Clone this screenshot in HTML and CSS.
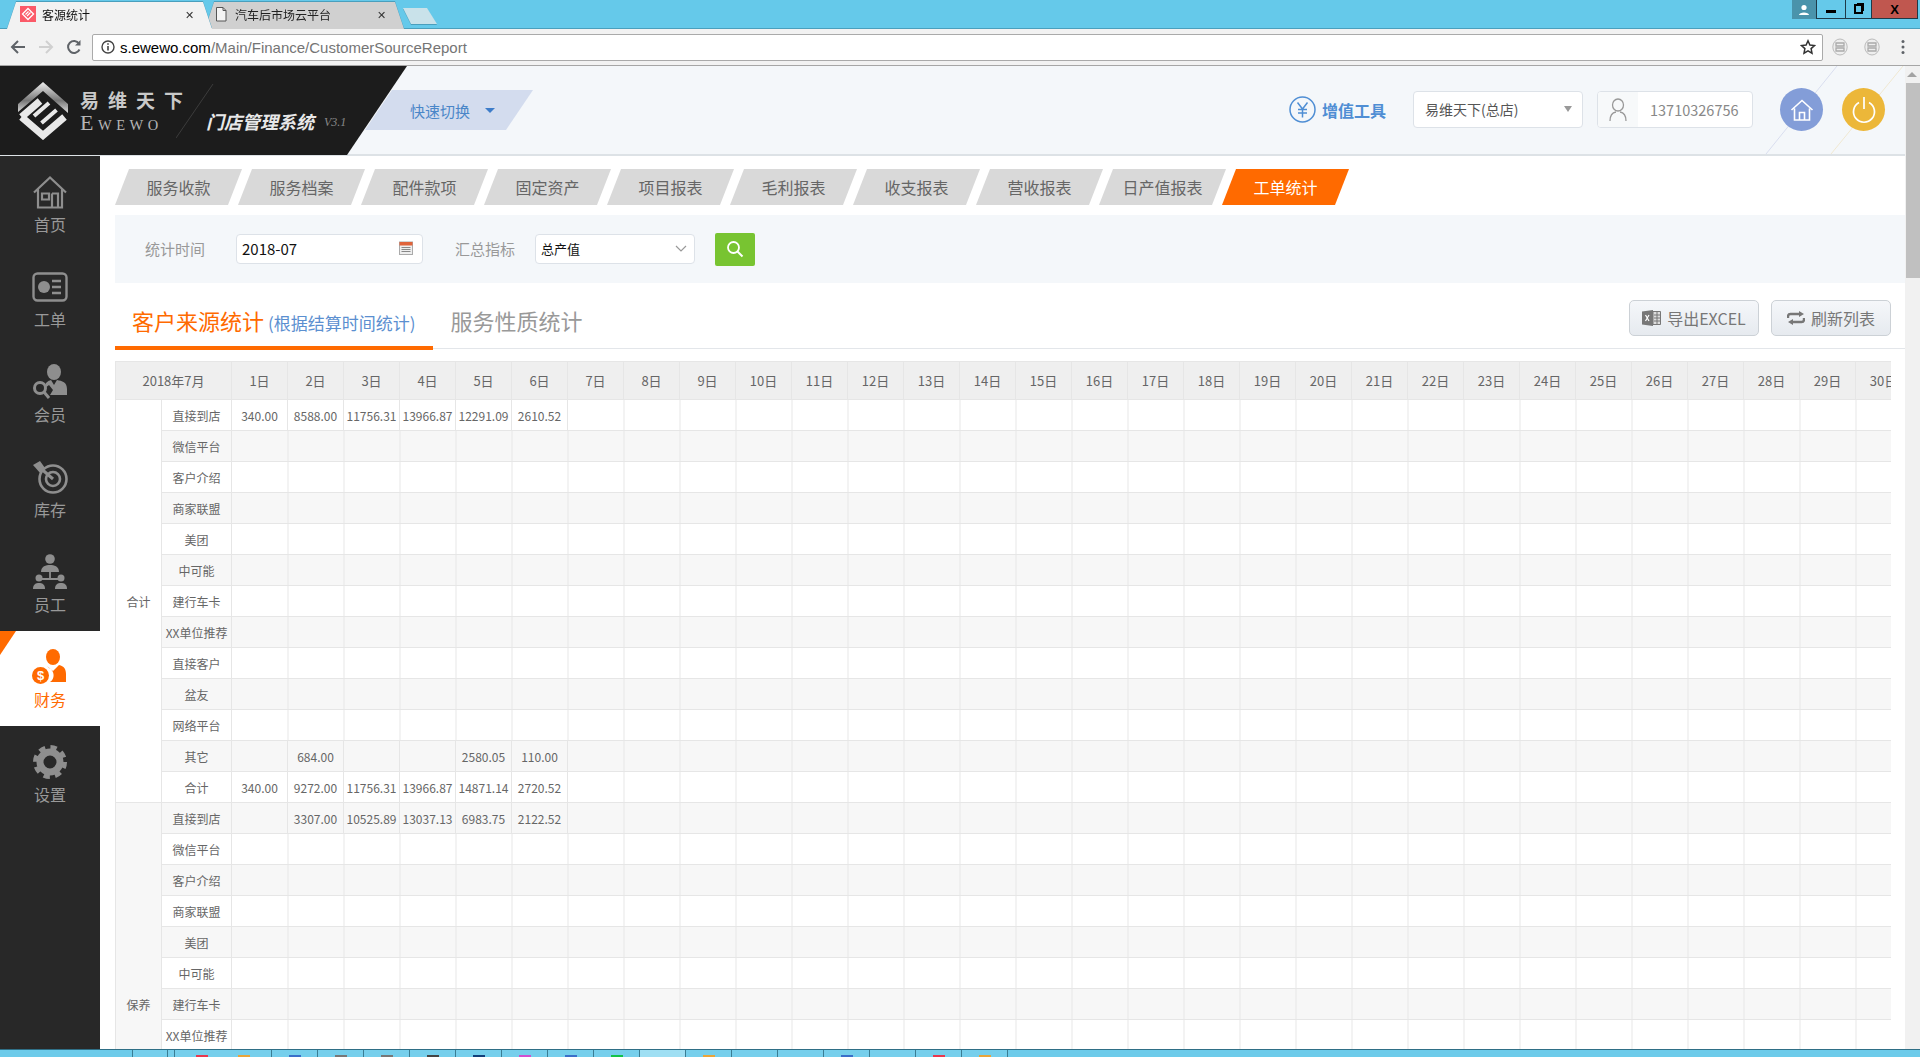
FILE: index.html
```html
<!DOCTYPE html>
<html>
<head>
    <meta charset="utf-8">
    <title>客源统计</title>
    <link rel="stylesheet" href="styles.css">
</head>
<body>
    <div class="tabstrip">
        <div class="tab-wrap on">
            <div class="tab">
                <svg class="favicon" width="16" height="16" viewBox="0 0 16 16"><rect width="16" height="16" fill="#fb5a68"/><path d="M8 2.5 13.5 8 8 13.5 2.5 8Z" fill="none" stroke="#fff" stroke-width="1.3"/><path d="M5.5 8.5 8.5 5.5M7 10 10.500 6.500" stroke="#fff" stroke-width="1.2"/></svg>
                <span class="tab-name">客源统计</span>
                <span class="tab-close">✕</span>
            </div>
        </div>
        <div class="tab-wrap off">
            <div class="tab">
                <svg class="favicon" width="16" height="16" viewBox="0 0 16 16"><path d="M3.500 1.500H10L13 4.500V15H3.500Z" fill="#f4f4f4" stroke="#555"/><path d="M10 1.500V4.500H13" fill="none" stroke="#555"/></svg>
                <span class="tab-name">汽车后市场云平台</span>
                <span class="tab-close">✕</span>
            </div>
        </div>
        <div class="newtab-wrap"><div class="newtab"></div></div>
        <div class="winctl">
            <span class="win-user"><svg width="12" height="12" viewBox="0 0 12 12"><circle cx="6" cy="3.500" r="2.600" fill="#fff"/><path d="M1 11C1 7.500 11 7.500 11 11Z" fill="#fff"/></svg></span>
            <span class="win-btn win-min"><i></i></span>
            <span class="win-btn win-max"><i></i></span>
            <span class="win-btn win-close">X</span>
        </div>
    </div>

    <div class="toolbar">
        <svg class="nav-ico" width="16" height="16" viewBox="0 0 16 16"><path d="M15 8H2M8 2 2 8l6 6" fill="none" stroke="#5f6368" stroke-width="2"/></svg>
        <svg class="nav-ico" width="16" height="16" viewBox="0 0 16 16"><path d="M1 8H14M8 2l6 6-6 6" fill="none" stroke="#d0d0d0" stroke-width="2"/></svg>
        <svg class="nav-ico" width="16" height="16" viewBox="0 0 16 16"><path d="M13.500 10.500A6 6 0 1 1 13 4.500" fill="none" stroke="#5f6368" stroke-width="2"/><path d="M14.500 1v5.500H9Z" fill="#5f6368"/></svg>
        <div class="addr">
            <svg width="14" height="14" viewBox="0 0 14 14"><circle cx="7" cy="7" r="6" fill="none" stroke="#444" stroke-width="1.400"/><path d="M7 6v4.500M7 3.200v1.600" stroke="#444" stroke-width="1.600"/></svg>
            <span class="addr-url"><b>s.ewewo.com</b>/Main/Finance/CustomerSourceReport</span>
            <svg class="addr-star" width="16" height="16" viewBox="0 0 16 16"><path d="M8 1.800 9.900 6 14.500 6.500 11.100 9.600 12 14.200 8 11.900 4 14.200 4.900 9.600 1.500 6.500 6.100 6Z" fill="none" stroke="#333" stroke-width="1.500"/></svg>
        </div>
        <svg class="ext-ico" width="16" height="18" viewBox="0 0 16 18"><ellipse cx="8" cy="9" rx="7.200" ry="8" fill="#eee" stroke="#bbb"/><path d="M4 5h8v3H4zM4 10h8v3H4z" fill="none" stroke="#aaa" stroke-width="1.300"/></svg>
        <svg class="ext-ico" width="16" height="18" viewBox="0 0 16 18"><ellipse cx="8" cy="9" rx="7.200" ry="8" fill="#eee" stroke="#bbb"/><path d="M4 5h8v3H4zM4 10h8v3H4z" fill="none" stroke="#aaa" stroke-width="1.300"/></svg>
        <svg class="menu-ico" width="4" height="16" viewBox="0 0 4 16"><circle cx="2" cy="2.500" r="1.500" fill="#5f6368"/><circle cx="2" cy="8" r="1.500" fill="#5f6368"/><circle cx="2" cy="13.500" r="1.500" fill="#5f6368"/></svg>
    </div>

    <div class="app">
        <div class="page">
            <div class="head">
                <div class="logo">
                    <svg class="logo-mark" width="50" height="58" viewBox="0 0 50 58">
                        <defs><linearGradient id="roof" x1="0" y1="0" x2="0" y2="1"><stop offset="0" stop-color="#eee"/><stop offset=".6" stop-color="#777"/><stop offset="1" stop-color="#ddd"/></linearGradient></defs>
                        <path d="M25 0 50 22V31L25 9 0 30V22Z" fill="url(#roof)"/>
                        <path d="M3.500 35 22 19M3.500 35 25 53.500 46.500 35" fill="none" stroke="#e8e8e8" stroke-width="7"/>
                        <path d="M16 34 31 21M23.500 41 38.500 28" stroke="#e8e8e8" stroke-width="4"/>
                    </svg>
                    <div class="brand">
                        <div class="brand-cn">易维天下</div>
                        <div class="brand-en"><span>E</span>WEWO</div>
                    </div>
                    <svg class="logo-slash" width="38" height="54" viewBox="0 0 38 54"><path d="M37 0 0 54" stroke="#3c3c3c"/></svg>
                    <div class="sysname">门店管理系统</div>
                    <div class="sysver">V3.1</div>
                </div>
                <div class="quick"><span>快速切换</span><i></i></div>
                <svg class="head-deco" width="180" height="88" viewBox="0 0 180 88"><path d="M112 0 41 88" stroke="#d9deef"/><path d="M178 0 106 88" stroke="#f0e8d2"/></svg>
                <div class="head-right">
                    <div class="vas">
                        <svg width="27" height="27" viewBox="0 0 27 27"><circle cx="13.500" cy="13.500" r="12.500" fill="none" stroke="#4f8ed4" stroke-width="1.500"/><path d="M8.500 6.500 13.500 13l5-6.500M13.500 13v8.500M9 13.500h9M9 17h9" fill="none" stroke="#4f8ed4" stroke-width="1.500"/></svg>
                        <span>增值工具</span>
                    </div>
                    <div class="shop"><span>易维天下(总店)</span><i></i></div>
                    <div class="user">
                        <span class="user-ico"><svg width="18" height="24" viewBox="0 0 18 24"><ellipse cx="9" cy="7" rx="5.500" ry="6" fill="none" stroke="#999" stroke-width="1.300"/><path d="M1 23C1 17 4 14.500 7 14M17 23C17 17 14 14.500 11 14" fill="none" stroke="#999" stroke-width="1.300"/></svg></span>
                        <span class="user-no">13710326756</span>
                    </div>
                    <span class="round round-home"><svg width="24" height="24" viewBox="0 0 24 24"><path d="M1.500 12 12 2.500 22.500 12M4.500 10.500V22H19.500V10.500M9.500 22V14.500H14.500V22" fill="none" stroke="#fff" stroke-width="1.600"/></svg></span>
                    <span class="round round-power"><svg width="26" height="28" viewBox="0 0 26 28"><path d="M8 6.500A10.500 10.500 0 1 0 18 6.500M13 1V13" fill="none" stroke="#fff" stroke-width="1.700"/></svg></span>
                </div>
            </div>

            <div class="layout">
                <div class="side">
                    <div class="side-item">
                        <svg width="34" height="33" viewBox="0 0 34 33"><path d="M1 17 17 2 33 17M5 14V32H29V14M9 18H16V24H9ZM19 18H25V32M19 18V32" fill="none" stroke="#8e8e8e" stroke-width="2.200"/></svg>
                        <span>首页</span>
                    </div>
                    <div class="side-item">
                        <svg width="36" height="30" viewBox="0 0 36 30"><rect x="1.500" y="1.500" width="33" height="27" rx="4" fill="none" stroke="#8e8e8e" stroke-width="2.400"/><circle cx="12" cy="15" r="6" fill="#8e8e8e"/><path d="M20 9H29M20 15H29M20 21H29" stroke="#8e8e8e" stroke-width="2.600"/></svg>
                        <span>工单</span>
                    </div>
                    <div class="side-item">
                        <svg width="36" height="36" viewBox="0 0 36 36"><ellipse cx="22" cy="8" rx="7" ry="8" fill="#8e8e8e"/><path d="M13 24C13 18 16 17 19 16L22 21 25 16C30 17 35 18 35 25V31H18L21 26 17 21Z" fill="#8e8e8e"/><circle cx="8" cy="24" r="5.500" fill="none" stroke="#8e8e8e" stroke-width="3"/><path d="M12 28 17 34" stroke="#8e8e8e" stroke-width="3"/></svg>
                        <span>会员</span>
                    </div>
                    <div class="side-item">
                        <svg width="36" height="34" viewBox="0 0 36 34"><circle cx="21" cy="19" r="13.500" fill="none" stroke="#8e8e8e" stroke-width="2.600"/><circle cx="21" cy="19" r="7" fill="none" stroke="#8e8e8e" stroke-width="2.600"/><path d="M21 19 6 6" stroke="#8e8e8e" stroke-width="3"/><path d="M1 5 8 1 13 8 9 14Z" fill="#8e8e8e"/></svg>
                        <span>库存</span>
                    </div>
                    <div class="side-item">
                        <svg width="34" height="36" viewBox="0 0 34 36"><circle cx="17" cy="5" r="4.800" fill="#8e8e8e"/><path d="M8 18C8 12 13 11 17 11S26 12 26 18Z" fill="#8e8e8e"/><path d="M17 18V25M7 25H27" stroke="#8e8e8e" stroke-width="1.800"/><circle cx="6" cy="24" r="3.500" fill="#8e8e8e"/><path d="M0 35C0 30 3 29 6 29S12 30 12 35Z" fill="#8e8e8e"/><circle cx="28" cy="24" r="3.500" fill="#8e8e8e"/><path d="M22 35C22 30 25 29 28 29S34 30 34 35Z" fill="#8e8e8e"/></svg>
                        <span>员工</span>
                    </div>
                    <div class="side-item on">
                        <svg width="36" height="36" viewBox="0 0 36 36"><ellipse cx="21" cy="8" rx="7" ry="8" fill="#ff6a00"/><path d="M15 17 21 22 27 16C32 17 34 20 34 25V33H18C23 30 23 22 17 19Z" fill="#ff6a00"/><circle cx="8.500" cy="26.500" r="8.500" fill="#ff6a00"/><text x="8.500" y="31" class="coin">$</text></svg>
                        <span>财务</span>
                    </div>
                    <div class="side-item">
                        <svg width="34" height="34" viewBox="0 0 34 34"><circle cx="17" cy="17" r="10" fill="none" stroke="#8e8e8e" stroke-width="7"/><circle cx="17" cy="17" r="14" fill="none" stroke="#8e8e8e" stroke-width="6" stroke-dasharray="6 4.996"/></svg>
                        <span>设置</span>
                    </div>
                </div>

                <div class="content">
                    <div class="subtabs">
                        <span>服务收款</span><span>服务档案</span><span>配件款项</span><span>固定资产</span><span>项目报表</span><span>毛利报表</span><span>收支报表</span><span>营收报表</span><span>日产值报表</span><span class="on">工单统计</span>
                    </div>
                    <div class="filter">
                        <label>统计时间</label>
                        <div class="date-box"><span>2018-07</span>
                            <svg width="14" height="14" viewBox="0 0 14 14"><rect x=".5" y="1" width="13" height="12.500" fill="#eee" stroke="#aaa"/><rect x=".5" y="1" width="13" height="3.500" fill="#e0633a"/><path d="M2.500 6.500h9M2.500 8.500h9M2.500 10.500h9" stroke="#888"/></svg>
                        </div>
                        <label class="lb2">汇总指标</label>
                        <div class="sel-box"><span>总产值</span>
                            <svg width="12" height="7" viewBox="0 0 12 7"><path d="M1 1 6 6 11 1" fill="none" stroke="#999" stroke-width="1.200"/></svg>
                        </div>
                        <span class="btn-search"><svg width="18" height="18" viewBox="0 0 18 18"><circle cx="7.500" cy="7.500" r="5.500" fill="none" stroke="#fff" stroke-width="1.800"/><path d="M11.500 11.500 16.500 16.500" stroke="#fff" stroke-width="2"/></svg></span>
                    </div>
                    <div class="stat-bar">
                        <div class="stat-tab on">客户来源统计<small>(根据结算时间统计)</small></div>
                        <div class="stat-tab">服务性质统计</div>
                        <div class="btns">
                            <span class="btn"><svg width="19" height="16" viewBox="0 0 19 16"><path d="M11 1.500H18.500V14.500H11Z" fill="#ddd" stroke="#777"/><path d="M12 5h6M12 8h6M12 11h6M15 2v12" stroke="#777"/><path d="M0 1.500 11 0V16L0 14.500Z" fill="#777"/><path d="M3.500 5 7 11M7 5 3.500 11" stroke="#fff" stroke-width="1.200"/></svg>导出EXCEL</span>
                            <span class="btn"><svg width="18" height="14" viewBox="0 0 18 14"><path d="M1 7V5.500C1 4 2 3 3.500 3H13M17 7V8.500C17 10 16 11 14.500 11H5" fill="none" stroke="#777" stroke-width="2.400"/><path d="M12 0 17 3 12 6ZM6 8 1 11 6 14Z" fill="#777"/></svg>刷新列表</span>
                        </div>
                    </div>
                    <div class="grid-wrap">
                        <table class="grid">
                            <colgroup>
                                <col class="c-group"><col class="c-name">
                                <col span="30" class="c-day">
                            </colgroup>
                            <thead>
                                <tr><th colspan="2">2018年7月</th><th>1日</th><th>2日</th><th>3日</th><th>4日</th><th>5日</th><th>6日</th><th>7日</th><th>8日</th><th>9日</th><th>10日</th><th>11日</th><th>12日</th><th>13日</th><th>14日</th><th>15日</th><th>16日</th><th>17日</th><th>18日</th><th>19日</th><th>20日</th><th>21日</th><th>22日</th><th>23日</th><th>24日</th><th>25日</th><th>26日</th><th>27日</th><th>28日</th><th>29日</th><th>30日</th></tr>
                            </thead>
                            <tbody>
                                <tr><td rowspan="13">合计</td><td>直接到店</td><td>340.00</td><td>8588.00</td><td>11756.31</td><td>13966.87</td><td>12291.09</td><td>2610.52</td><td colspan="24" class="rest"></td></tr>
                                <tr><td>微信平台</td><td colspan="30" class="rest"></td></tr>
                                <tr><td>客户介绍</td><td colspan="30" class="rest"></td></tr>
                                <tr><td>商家联盟</td><td colspan="30" class="rest"></td></tr>
                                <tr><td>美团</td><td colspan="30" class="rest"></td></tr>
                                <tr><td>中可能</td><td colspan="30" class="rest"></td></tr>
                                <tr><td>建行车卡</td><td colspan="30" class="rest"></td></tr>
                                <tr><td>XX单位推荐</td><td colspan="30" class="rest"></td></tr>
                                <tr><td>直接客户</td><td colspan="30" class="rest"></td></tr>
                                <tr><td>盆友</td><td colspan="30" class="rest"></td></tr>
                                <tr><td>网络平台</td><td colspan="30" class="rest"></td></tr>
                                <tr><td>其它</td><td></td><td>684.00</td><td></td><td></td><td>2580.05</td><td>110.00</td><td colspan="24" class="rest"></td></tr>
                                <tr><td>合计</td><td>340.00</td><td>9272.00</td><td>11756.31</td><td>13966.87</td><td>14871.14</td><td>2720.52</td><td colspan="24" class="rest"></td></tr>
                                <tr><td rowspan="13">保养</td><td>直接到店</td><td></td><td>3307.00</td><td>10525.89</td><td>13037.13</td><td>6983.75</td><td>2122.52</td><td colspan="24" class="rest"></td></tr>
                                <tr><td>微信平台</td><td colspan="30" class="rest"></td></tr>
                                <tr><td>客户介绍</td><td colspan="30" class="rest"></td></tr>
                                <tr><td>商家联盟</td><td colspan="30" class="rest"></td></tr>
                                <tr><td>美团</td><td colspan="30" class="rest"></td></tr>
                                <tr><td>中可能</td><td colspan="30" class="rest"></td></tr>
                                <tr><td>建行车卡</td><td colspan="30" class="rest"></td></tr>
                                <tr><td>XX单位推荐</td><td colspan="30" class="rest"></td></tr>
                                <tr><td>直接客户</td><td colspan="30" class="rest"></td></tr>
                                <tr><td>盆友</td><td colspan="30" class="rest"></td></tr>
                                <tr><td>网络平台</td><td colspan="30" class="rest"></td></tr>
                                <tr><td>其它</td><td colspan="30" class="rest"></td></tr>
                                <tr><td>合计</td><td colspan="30" class="rest"></td></tr>
                            </tbody>
                        </table>
                    </div>
                </div>
            </div>
        </div>
        <div class="vscroll">
            <span class="vs-up"></span>
            <span class="vs-thumb"></span>
        </div>
    </div>

    <div class="taskbar">
        <span class="task task-start"></span>
        <span class="task task-sm"></span>
        <span class="task task-gap"></span>
        <span class="task task-wide"><i class="c-red"></i><i class="c-org"></i></span>
        <span class="task"><i class="c-blue"></i></span>
        <span class="task"><i class="c-gray"></i></span>
        <span class="task"><i class="c-gray"></i></span>
        <span class="task"><i class="c-dark"></i></span>
        <span class="task"><i class="c-navy"></i></span>
        <span class="task"><i class="c-pink"></i></span>
        <span class="task"><i class="c-blue"></i></span>
        <span class="task"><i class="c-green"></i></span>
        <span class="task on"></span>
        <span class="task"><i class="c-org"></i></span>
        <span class="task"></span>
        <span class="task"></span>
        <span class="task"><i class="c-blue"></i></span>
        <span class="task"></span>
        <span class="task"><i class="c-red"></i></span>
        <span class="task"><i class="c-org"></i></span>
    </div>
</body>
</html>
```

FILE: styles.css
```css
* { box-sizing: border-box; }
html, body { margin: 0; height: 100%; }
body { height: 1057px; overflow: hidden; background: #fff; color: #666; font-family: "Noto Sans CJK SC", "Liberation Sans", sans-serif; display: flex; flex-direction: column; }
i { display: block; font-style: normal; }

/* browser frame */
.tabstrip { height: 29px; flex: none; display: flex; align-items: flex-end; padding-left: 7px; background: #65c9ea; border-bottom: 1px solid #4a9fbd; }
.tab-wrap { width: 205px; height: 27px; margin-bottom: -1px; filter: drop-shadow(0 -1px 0 #4a9fbd); }
.tab-wrap.on { position: relative; z-index: 2; }
.tab-wrap.off { width: 199px; margin-left: -7px; }
.tab { height: 27px; display: flex; align-items: center; padding: 0 18px 3px 13px; clip-path: polygon(9px 0, calc(100% - 9px) 0, 100% 100%, 0 100%); font-size: 12px; color: #111; }
.on .tab { background: #f2f2f2; }
.off .tab { background: #d0d0d0; padding-left: 8px; color: #222; }
.favicon { flex: none; margin-right: 6px; }
.tab-name { flex: 1; }
.tab-close { font-size: 11px; color: #333; }
.newtab-wrap { margin: 0 0 4px -1px; filter: drop-shadow(0 1px 0 #4a9fbd); }
.newtab { width: 34px; height: 16px; background: #c9e2ea; clip-path: polygon(0 0, 24px 0, 100% 100%, 8px 100%); }
.winctl { margin-left: auto; margin-right: 2px; align-self: flex-start; display: flex; height: 19px; }
.win-user { width: 24px; background: #4a93ab; display: flex; align-items: center; justify-content: center; }
.win-btn { height: 19px; display: flex; align-items: center; justify-content: center; border: 1px solid #1e3a48; border-top: 0; }
.win-min { width: 29px; border-right: 0; }
.win-min i { width: 10px; height: 3px; margin-top: 5px; background: #000; }
.win-max { width: 26px; border-right: 0; }
.win-max i { width: 9px; height: 10px; border: 2px solid #000; box-shadow: 2px -2px 0 -1px #000; }
.win-close { width: 47px; background: #c0574f; color: #000; font: bold 13px "Liberation Sans", sans-serif; }

.toolbar { height: 37px; flex: none; display: flex; align-items: center; padding-left: 10px; background: #f2f2f2; border-bottom: 1px solid #a6a6a6; }
.nav-ico { margin-right: 12px; flex: none; }
.addr { width: 1731px; height: 27px; margin-left: -2px; display: flex; align-items: center; padding: 0 6px 0 8px; background: #fff; border: 1px solid #aaa; border-radius: 2px; }
.addr-url { margin-left: 5px; font: 15px "Liberation Sans", sans-serif; color: #757575; }
.addr-url b { font-weight: normal; color: #000; }
.addr-star { margin-left: auto; margin-right: 0; }
.ext-ico { margin-left: 9px; flex: none; }
.ext-ico + .ext-ico { margin-left: 16px; }
.menu-ico { margin-left: 21px; flex: none; }

/* page */
.app { height: 983px; flex: none; display: flex; }
.page { width: 1905px; flex: none; display: flex; flex-direction: column; }
.vscroll { flex: 1; background: #f1f1f1; display: flex; flex-direction: column; align-items: flex-end; }
.vs-up { width: 0; height: 0; margin: 6px 3px 6px 0; border: 5px solid transparent; border-top: 0; border-bottom: 5px solid #a3a3a3; }
.vs-thumb { width: 14px; height: 195px; background: #c0c0c0; }

.head { height: 90px; flex: none; display: flex; align-items: center; position: relative; background: #f4f7fa; border-bottom: 2px solid #dde2e6; }
.head-deco { position: absolute; right: 0; top: 0; }
.logo { width: 407px; height: 89px; margin-bottom: -1px; flex: none; align-self: flex-start; display: flex; align-items: center; padding-left: 18px; position: relative; z-index: 1; background: #1c1c1c; clip-path: polygon(0 0, 100% 0, 347px 100%, 0 100%); }
.logo-mark { flex: none; margin-top: 0; }
.brand { margin-left: 12px; width: 100px; flex: none; padding-top: 3px; }
.brand-cn { font-size: 19px; font-weight: 700; line-height: 22px; letter-spacing: 9px; color: #c9c9c9; white-space: nowrap; }
.brand-en { font: 14.500px "Liberation Serif", serif; line-height: 20px; letter-spacing: 4.500px; color: #b5b5b5; margin-top: 2px; white-space: nowrap; }
.brand-en span { font-size: 22px; }
.logo-slash { margin-left: -4px; flex: none; }
.sysname { margin: 20px 0 0 -8px; font-size: 18px; font-weight: 700; font-style: italic; color: #e8e8e8; white-space: nowrap; }
.sysver { margin: 24px 0 0 10px; font: italic 12px "Liberation Serif", serif; color: #888; }
.quick { width: 168px; height: 40px; margin: 0 0 0 -42px; flex: none; display: flex; align-items: center; padding-left: 45px; background: #d3dcee; clip-path: polygon(27px 0, 100% 0, calc(100% - 27px) 100%, 0 100%); font-size: 15px; color: #4a86c8; }
.quick i { margin-left: 15px; border: 5px solid transparent; border-bottom: 0; border-top: 5px solid #3d7cc9; }
.head-right { margin-left: auto; margin-top: -1px; padding-right: 20px; display: flex; align-items: center; position: relative; }
.vas { display: flex; align-items: center; font-size: 16px; font-weight: 700; color: #4f8ed4; margin-right: 27px; }
.vas span { margin-left: 6px; }
.shop { width: 170px; height: 37px; display: flex; align-items: center; justify-content: space-between; padding: 0 10px 2px 11px; background: #fff; border: 1px solid #dde2e8; border-radius: 4px; font-size: 14px; color: #555; }
.shop i { border: 4px solid transparent; border-bottom: 0; border-top: 6px solid #999; }
.user { width: 156px; height: 37px; margin-left: 14px; display: flex; align-items: center; background: #fff; border: 1px solid #dde2e8; border-radius: 4px; overflow: hidden; }
.user-ico { width: 40px; height: 100%; flex: none; display: flex; align-items: center; justify-content: center; background: #f7f9fa; }
.user-no { margin: -1px 0 0 12px; font-size: 14.500px; color: #888; }
.round { width: 43px; height: 43px; flex: none; display: flex; align-items: center; justify-content: center; border-radius: 50%; }
.round-home { margin-left: 27px; background: #839dd8; }
.round-power { margin-left: 19px; background: #ecb739; }

.layout { flex: 1; min-height: 0; display: flex; }

/* left menu */
.side { width: 100px; flex: none; background: #282828; }
.side-item { height: 95px; display: flex; flex-direction: column; align-items: center; padding-top: 18px; position: relative; font-size: 16px; line-height: 24px; color: #999; }
.side-item svg { height: 36px; flex: none; margin-bottom: 2px; }
.side-item.on { background: #fff; color: #ff6a00; }
.side-item.on::before { content: ""; position: absolute; left: 0; top: 0; width: 16px; height: 24px; background: #ff6a00; clip-path: polygon(0 0, 100% 0, 0 100%); }
.coin { font: bold 13px "Liberation Sans", sans-serif; fill: #fff; text-anchor: middle; }

/* right side */
.content { flex: 1; min-width: 0; display: flex; flex-direction: column; padding: 13px 0 0 15px; overflow: hidden; }
.subtabs { display: flex; flex: none; }
.subtabs span { width: 127px; height: 36px; margin-right: -4px; flex: none; display: flex; align-items: center; justify-content: center; background: #d9d9d9; clip-path: polygon(14px 0, 100% 0, calc(100% - 14px) 100%, 0 100%); font-size: 16px; color: #666; }
.subtabs .on { background: #ff6a00; color: #fff; }
.filter { height: 68px; margin-top: 10px; flex: none; display: flex; align-items: center; padding-left: 30px; background: #f4f7fa; font-size: 15px; color: #999; }
.filter label { width: 91px; margin-top: -2px; }
.filter .lb2 { width: 80px; margin-left: 32px; }
.date-box { width: 187px; height: 30px; display: flex; align-items: center; justify-content: space-between; padding: 0 9px 2px 5px; background: #fff; border: 1px solid #dde2e8; border-radius: 4px; color: #111; }
.sel-box { width: 160px; height: 30px; display: flex; align-items: center; justify-content: space-between; padding: 0 7px 1px 5px; background: #fff; border: 1px solid #dde2e8; border-radius: 4px; font-size: 13px; color: #111; }
.btn-search { width: 40px; height: 33px; margin-left: 20px; display: flex; align-items: center; justify-content: center; background: #78c431; border-radius: 2px; }

.stat-bar { height: 66px; flex: none; display: flex; padding-right: 14px; border-bottom: 1px solid #e3e6ea; }
.stat-tab { height: 67px; margin-left: 1px; padding: 22px 17px 0; font-size: 22px; line-height: 30px; color: #999; white-space: nowrap; }
.stat-tab.on { margin-left: 0; color: #ff6a00; border-bottom: 4px solid #ff6a00; }
.stat-tab small { margin-left: 4px; font-size: 17px; color: #5b8fd0; }
.btns { margin-left: auto; margin-top: 17px; display: flex; gap: 12px; align-items: flex-start; }
.btn { height: 36px; display: flex; align-items: center; justify-content: center; background: linear-gradient(#f5f7fa, #e6eaef); border: 1px solid #ccd1d6; border-radius: 5px; font-size: 16px; color: #777; }
.btn:first-child { width: 130px; }
.btn:last-child { width: 120px; }
.btn svg { margin-right: 6px; flex: none; }

.grid-wrap { flex: 1; min-height: 0; width: 1776px; margin-top: 12px; overflow: hidden; }
.grid { width: 1796px; table-layout: fixed; border-collapse: collapse; font-size: 12px; color: #666; }
.c-group { width: 46px; }
.c-name { width: 70px; }
.c-day { width: 56px; }
.grid th, .grid td { padding: 0; text-align: center; white-space: nowrap; border: 1px solid #e6e6e6; font-weight: normal; }
.grid th { height: 38px; background: #efefef; font-size: 13px; }
.grid td { height: 31px; }
.grid tbody tr:nth-child(even) { background: #f7f7f7; }
/* blank days: one cell, with the grid lines repeated along it */
.grid td.rest { background-image: repeating-linear-gradient(90deg, transparent 0 55px, #e6e6e6 55px 56px); }

/* windows taskbar */
.taskbar { height: 8px; flex: none; display: flex; align-items: flex-end; background: #6dcbea; border-top: 1px solid #2f6f86; }
.task { width: 46px; height: 7px; display: flex; justify-content: center; gap: 30px; background: #76cfec; border-right: 1px solid #3a7d94; align-items: flex-end; }
.task-start { width: 133px; background: #6dcbea; }
.task-sm { width: 35px; }
.task-gap { width: 7px; }
.task-wide { width: 97px; }
.task.on { background: #9fdff3; }
.task i { width: 12px; height: 2px; }
.c-red { background: #e8384f; }
.c-org { background: #e9a53a; }
.c-blue { background: #3a6fc9; }
.c-gray { background: #777; }
.c-dark { background: #444; }
.c-navy { background: #123f7a; }
.c-pink { background: #d04fd0; }
.c-green { background: #12c24a; }
```
